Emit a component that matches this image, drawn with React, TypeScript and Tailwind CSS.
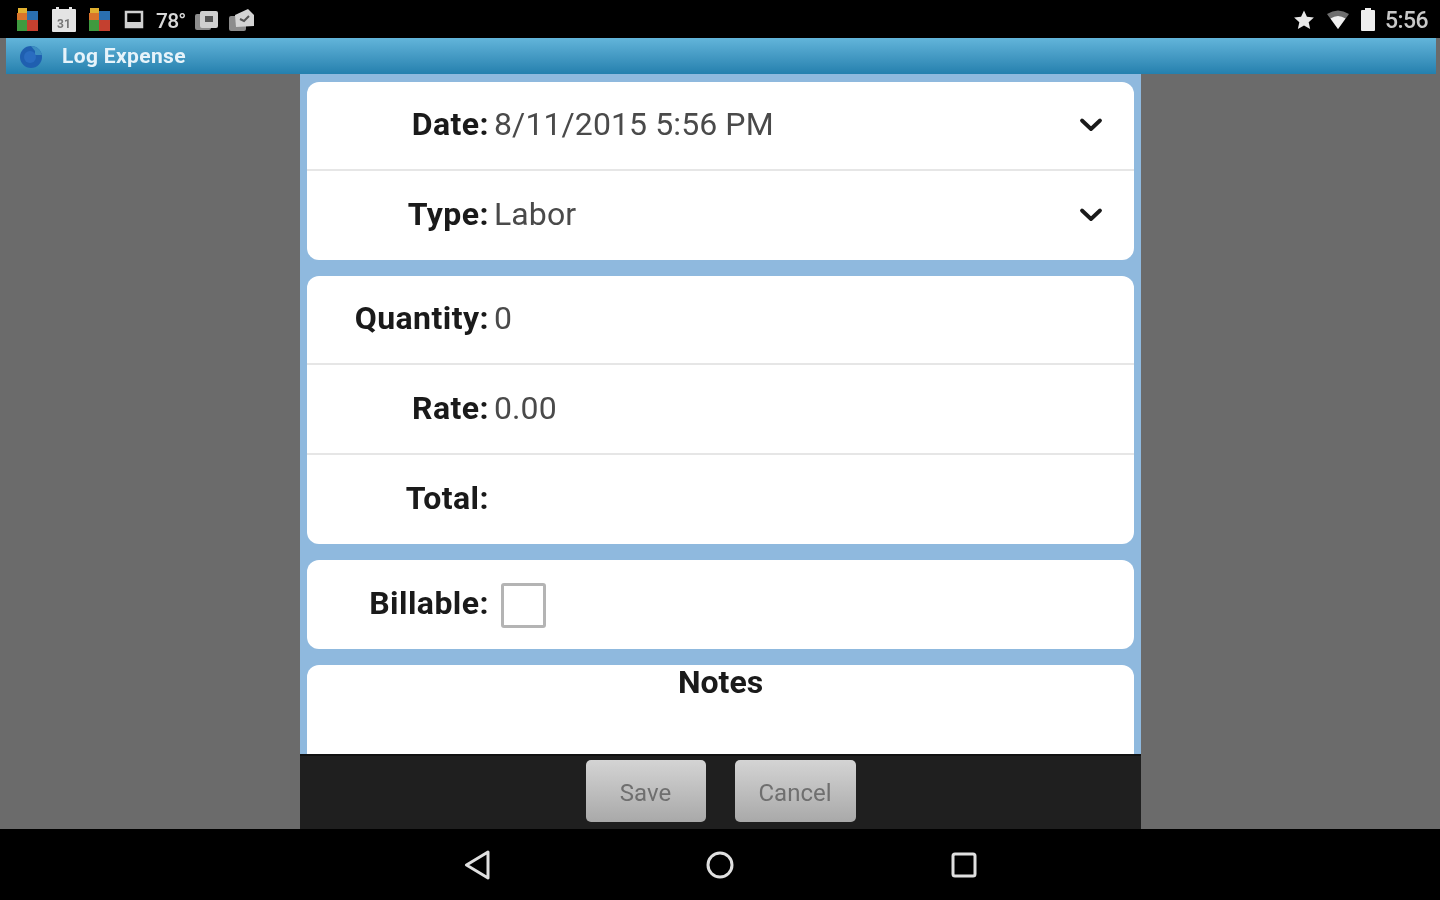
import type { ReactNode } from 'react';

const font = { fontFamily: 'Roboto, "Liberation Sans", sans-serif' };

const Chevron = () => (
  <svg width="24" height="16" viewBox="0 0 24 16" fill="none" stroke="#1a1a1a" strokeWidth="3.8" strokeLinecap="round" strokeLinejoin="round">
    <path d="M3 3.5 L12 12 L21 3.5" />
  </svg>
);

const Row = ({ label, value, chevron, border, tall, children }: { label: string; value?: string; chevron?: boolean; border?: boolean; tall?: boolean; children?: ReactNode }) => (
  <div className={`flex items-center pr-[31px] ${tall ? 'h-[90px]' : 'h-[89px]'} ${border ? 'border-b-2 border-[#e6e6e6]' : ''}`}>
    <span className="w-[182px] pb-[3px] text-right font-bold text-[#1a1a1a] text-[32px] leading-none tracking-[0.45px]">{label}</span>
    {value && <span className="ml-[5px] pb-[3px] text-[#4a4a4a] text-[32px] leading-none tracking-[0.1px]">{value}</span>}
    {children}
    {chevron && <span className="ml-auto mb-[2px] flex"><Chevron /></span>}
  </div>
);

const Mosaic = () => (
  <svg width="26" height="24" viewBox="0 0 26 24">
    <rect x="3" y="0" width="9" height="5" fill="#e0b030" />
    <rect x="2" y="5" width="10" height="7" fill="#d9742b" />
    <rect x="12" y="3" width="11" height="9" fill="#2a6fb0" />
    <rect x="2" y="12" width="10" height="11" fill="#3f9a3f" />
    <rect x="12" y="12" width="11" height="11" fill="#c4402f" />
  </svg>
);

const StatusIcons = () => (
  <div className="flex items-center">
    <span className="ml-[15px] flex"><Mosaic /></span>
    <svg className="ml-[10px]" width="26" height="26" viewBox="0 0 26 26">
      <rect x="1" y="2" width="24" height="23" rx="1" fill="#e4e4e4" />
      <rect x="5" y="0" width="3" height="5" fill="#e4e4e4" />
      <rect x="18" y="0" width="3" height="5" fill="#e4e4e4" />
      <text x="13" y="21" textAnchor="middle" fontSize="12" fontWeight="700" fill="#777">31</text>
    </svg>
    <span className="ml-[10px] flex"><Mosaic /></span>
    <svg className="ml-[10px]" width="22" height="22" viewBox="0 0 22 22" fill="none">
      <rect x="3" y="3" width="16" height="15" stroke="#d0d0d0" strokeWidth="2.5" />
      <rect x="3" y="13" width="16" height="5" fill="#d0d0d0" />
    </svg>
    <span className="ml-[11px] pt-[3px] text-[21px] leading-none text-[#d8d8d8] font-medium tracking-[-0.8px]">78°</span>
    <svg className="ml-[8px]" width="26" height="24" viewBox="0 0 26 24">
      <rect x="1" y="6" width="16" height="16" rx="2" fill="#8c8c8c" />
      <rect x="6" y="3" width="18" height="17" rx="2" fill="#cfcfcf" />
      <rect x="11" y="8" width="8" height="6" fill="#555" />
    </svg>
    <svg className="ml-[8px]" width="28" height="26" viewBox="0 0 28 26">
      <rect x="1" y="9" width="17" height="15" rx="2" fill="#8c8c8c" />
      <path d="M7 8 L20 2 L26 8 L26 19 L8 20 Z" fill="#d4d4d4" />
      <path d="M12 12 L16 14 L21 9" stroke="#555" strokeWidth="2" fill="none" />
    </svg>
  </div>
);

export default function App() {
  return (
    <div className="w-[1440px] h-[900px] flex flex-col bg-black overflow-hidden blur-[0.6px]" style={font}>
      {/* status bar */}
      <div className="h-[38px] shrink-0 pt-px flex items-center justify-between">
        <StatusIcons />
        <div className="flex items-center pr-[12px]">
          <svg width="22" height="22" viewBox="0 0 24 24" fill="#e8e8e8">
            <path d="M12 1.5l3.2 7 7.6.8-5.7 5.1 1.6 7.5L12 18.1l-6.7 3.8 1.6-7.5L1.2 9.3l7.6-.8z" />
          </svg>
          <svg className="ml-[11px]" width="24" height="20" viewBox="0 0 24 20">
            <path d="M1 4 Q12 -3 23 4 L12 19 Z" fill="#6e6e6e" />
            <path d="M4.5 8.5 Q12 3.5 19.5 8.5 L12 19 Z" fill="#f0f0f0" />
          </svg>
          <svg className="ml-[10px]" width="16" height="24" viewBox="0 0 16 24">
            <rect x="5" y="0" width="6" height="3" fill="#eeeeee" />
            <rect x="1" y="2" width="14" height="21" rx="1" fill="#eeeeee" />
          </svg>
          <span className="ml-[9px] pt-[2px] text-[23px] leading-none text-[#c8c8c8] font-medium tracking-tight">5:56</span>
        </div>
      </div>

      {/* title bar */}
      <div className="h-[36px] shrink-0 flex bg-[#6b6b6b] pl-[6px] pr-[4px]">
        <div className="flex-1 flex items-center bg-gradient-to-b from-[#62b5da] to-[#2480ae]">
          <svg className="ml-[12px]" width="26" height="26" viewBox="0 0 26 26">
            <circle cx="13" cy="14" r="11" fill="#1f5fb0" />
            <path d="M13 3 A11 11 0 0 1 24 12 L17 12 L17 8 Z" fill="#3d8fc0" />
            <circle cx="12" cy="14" r="6" fill="#2a6cc0" />
          </svg>
          <span className="ml-[18px] pt-px text-[21px] leading-none font-bold text-[#e6f3fa] tracking-[0.35px]">Log Expense</span>
        </div>
      </div>

      {/* content */}
      <div className="flex-1 min-h-0 flex justify-center bg-[#6b6b6b]">
        <div className="w-[841px] ml-px flex flex-col">
          <div className="flex-1 min-h-0 overflow-hidden bg-[#8fb9de] px-[7px] pt-[8px] flex flex-col gap-[16px]">
            <div className="bg-white rounded-[12px] shrink-0">
              <Row label="Date:" value="8/11/2015 5:56 PM" chevron border />
              <Row label="Type:" value="Labor" chevron />
            </div>
            <div className="bg-white rounded-[12px] shrink-0">
              <Row label="Quantity:" value="0" border />
              <Row label="Rate:" value="0.00" border tall />
              <Row label="Total:" />
            </div>
            <div className="bg-white rounded-[12px] shrink-0">
              <Row label="Billable:">
                <span className="ml-[12px] mt-[2px] w-[45px] h-[45px] border-[3px] border-[#b4b4b4] rounded-[3px] bg-white" />
              </Row>
            </div>
            <div className="bg-white rounded-t-[12px] flex-1 shrink-0 min-h-[89px] text-center">
              <span className="block pt-px font-bold text-[#1a1a1a] text-[32px] leading-none">Notes</span>
            </div>
          </div>
          <div className="h-[75px] shrink-0 bg-[#1f1f1f] border-t-2 border-t-[#111] pb-[3px] flex items-center justify-center gap-[29px]">
            <button className="w-[120px] h-[62px] pt-[3px] rounded-[5px] bg-gradient-to-b from-[#d4d4d4] to-[#a9a9a9] text-[#6f6f6f] text-[24px] leading-none">Save</button>
            <button className="w-[121px] h-[62px] pt-[3px] rounded-[5px] bg-gradient-to-b from-[#d4d4d4] to-[#a9a9a9] text-[#6f6f6f] text-[24px] leading-none">Cancel</button>
          </div>
        </div>
      </div>

      {/* nav bar */}
      <div className="h-[71px] shrink-0 flex items-center justify-center">
        <svg width="26" height="30" viewBox="0 0 26 30" fill="none" stroke="#e0e0e0" strokeWidth="3" strokeLinejoin="round" className="mr-[216px]">
          <path d="M24 2 L2.5 15 L24 28 Z" />
        </svg>
        <svg width="28" height="28" viewBox="0 0 28 28" fill="none" stroke="#e0e0e0" strokeWidth="3">
          <circle cx="14" cy="14" r="12" />
        </svg>
        <svg width="26" height="26" viewBox="0 0 26 26" fill="none" stroke="#e0e0e0" strokeWidth="3" className="ml-[217px]">
          <rect x="2" y="2" width="22" height="22" rx="2" />
        </svg>
      </div>
    </div>
  );
}
